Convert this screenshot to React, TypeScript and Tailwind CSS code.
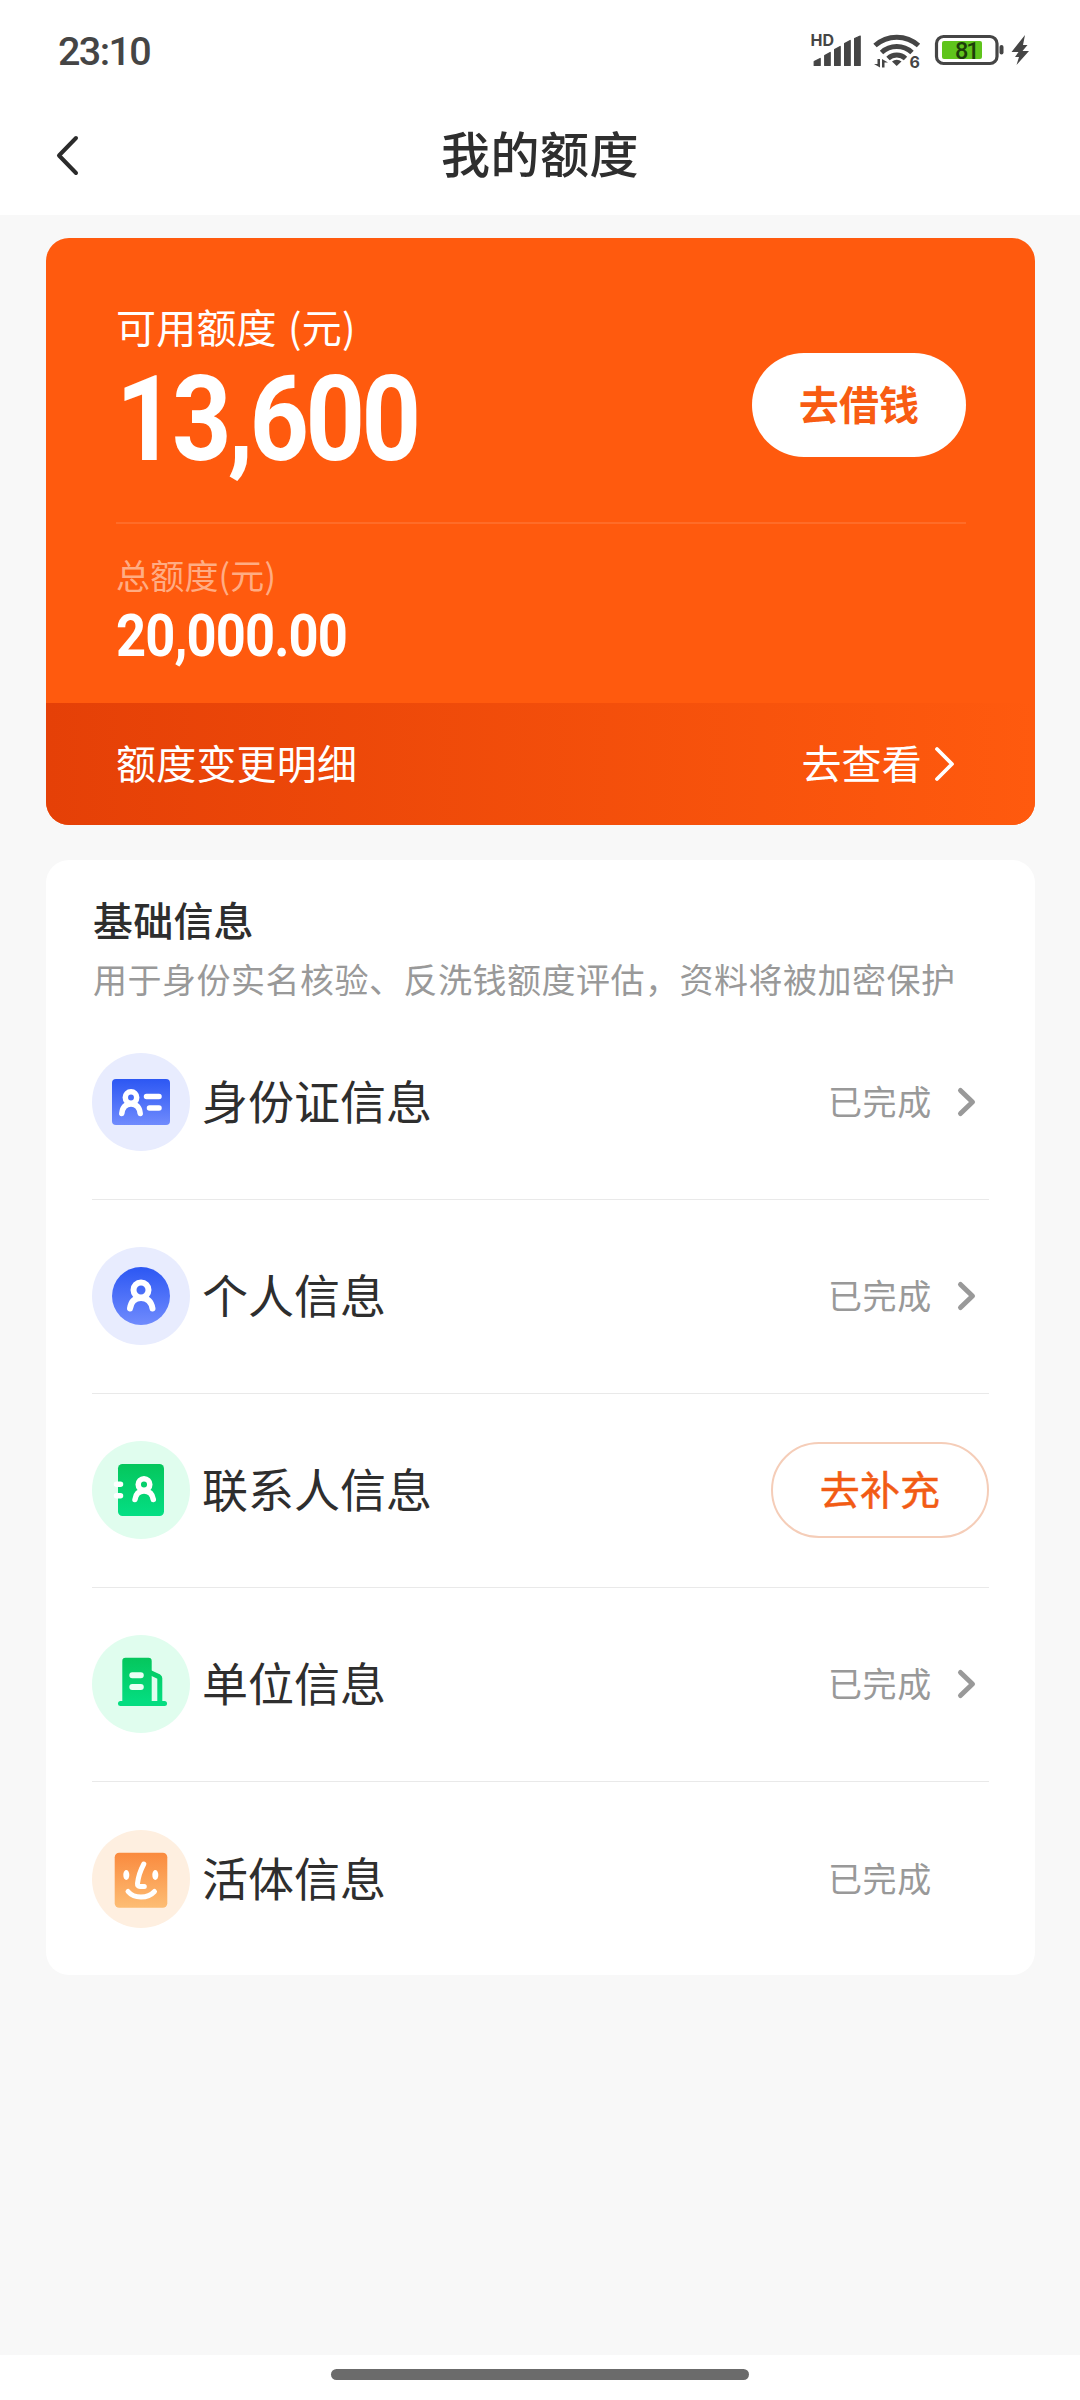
import type { ReactNode } from "react";
import { clsx } from "clsx";

type InfoItem = {
  key: string;
  label: string;
  icon: ReactNode;
  done: boolean;
  arrow: boolean;
};

function StatusIcons() {
  return (
    <svg width="270" height="80" viewBox="0 0 270 80" fill="none">
      <text x="30.500" y="36" fontSize="16" fontWeight="700" fill="#454545" fontFamily="Inter, sans-serif" textLength="23.500">
        HD
      </text>
      <g fill="#454545" stroke="#454545" strokeWidth="1.200" strokeLinejoin="round">
        <path d="M34.200 51.500l6-3V55.400h-6zM44.700 45.500l5.500-3V55.400h-5.500zM54.600 39.500l5.600-3V55.400h-5.600zM64.600 33.500l5.600-3V55.400h-5.600zM74.600 28.500l5.600-2.500V55.400h-5.600z" />
      </g>
      <g fill="#454545">
        <path d="M112 51.500a7 7 0 0 1 9.500 0L116.700 56z" />
        <path d="M94 54h3.500v-5h2.500v8.500zM102 57.500V49l6 3.500h-3.500v5z" />
        <rect x="219.500" y="35" width="4" height="9.500" rx="2" />
        <path d="M245 25l-13.500 17h7l-3.500 5h4l-2.500 8L249 41h-6.500l5-6h-4.500z" />
      </g>
      <g stroke="#454545" strokeWidth="5">
        <path d="M95 35.500a32.500 32.500 0 0 1 43.500 0" />
        <path d="M101.500 42.500a22.500 22.500 0 0 1 30.500 0" />
        <path d="M108 48.500a13 13 0 0 1 17.500 0" />
      </g>
      <text x="129.500" y="58" fontSize="16" fontWeight="700" fill="#454545" fontFamily="Inter, sans-serif">
        6
      </text>
      <rect x="156.500" y="26.500" width="60.500" height="27" rx="7" stroke="#454545" strokeWidth="3.200" />
      <rect x="162" y="31" width="40" height="18" rx="2" fill="#5fc41c" />
      <text x="175" y="48.500" fontSize="23.500" fontWeight="500" fill="#1d3d0a" fontFamily="Roboto, sans-serif" textLength="24.500">
        81
      </text>
    </svg>
  );
}

function IdCardIcon() {
  return (
    <svg className="size-[98px]" viewBox="0 0 98 98" fill="none">
      <defs>
        <linearGradient id="id-card" x1="0" y1="0" x2="0" y2="1">
          <stop stopColor="#2c57f3" />
          <stop offset="1" stopColor="#708bfd" />
        </linearGradient>
      </defs>
      <circle cx="49" cy="49" r="49" fill="#e8ecfe" />
      <rect x="20" y="26" width="58" height="46" rx="4" fill="url(#id-card)" />
      <g stroke="#fff" strokeWidth="5.500" strokeLinecap="round">
        <circle cx="39" cy="44.500" r="5.700" />
        <path d="M29.800 60.500c.7-6.500 4-9.500 9.200-9.500s8.500 3 9.200 9.500" />
        <path d="M54.500 43.500H67M57.500 55H67" />
      </g>
    </svg>
  );
}

function PersonIcon() {
  return (
    <svg className="size-[98px]" viewBox="0 0 98 98" fill="none">
      <defs>
        <linearGradient id="person" x1="0" y1="0" x2="0" y2="1">
          <stop stopColor="#2c57f3" />
          <stop offset="1" stopColor="#708bfd" />
        </linearGradient>
      </defs>
      <circle cx="49" cy="49" r="49" fill="#e8ecfe" />
      <circle cx="49" cy="49" r="29" fill="url(#person)" />
      <g stroke="#fff" strokeWidth="6" strokeLinecap="round">
        <circle cx="49" cy="43" r="7.500" />
        <path d="M38 61.500c1-7 5-10.500 11-10.500s10.300 3.500 11.500 10.500" />
      </g>
    </svg>
  );
}

function ContactsIcon() {
  return (
    <svg className="size-[98px]" viewBox="0 0 98 98" fill="none">
      <defs>
        <linearGradient id="contacts" x1="0" y1="0" x2="0" y2="1">
          <stop stopColor="#05c65c" />
          <stop offset="1" stopColor="#04df84" />
        </linearGradient>
      </defs>
      <circle cx="49" cy="49" r="49" fill="#e0fdee" />
      <rect x="26" y="23" width="46" height="52" rx="4.500" fill="url(#contacts)" />
      <g stroke="#fff" strokeWidth="5.500" strokeLinecap="round">
        <path d="M24.500 43.300h4M24.500 54.700h4" />
        <circle cx="52" cy="43.500" r="5.800" />
        <path d="M43 58.500c.8-6 4-8.500 9-8.500s8.400 2.500 9.300 8.500" />
      </g>
    </svg>
  );
}

function CompanyIcon() {
  return (
    <svg className="size-[98px]" viewBox="0 0 98 98" fill="none">
      <defs>
        <linearGradient id="company" gradientUnits="userSpaceOnUse" x1="0" y1="22" x2="0" y2="71">
          <stop stopColor="#05c65c" />
          <stop offset="1" stopColor="#04df84" />
        </linearGradient>
      </defs>
      <circle cx="49" cy="49" r="49" fill="#e0fdee" />
      <path d="M33.500 22.700h23a3.200 3.200 0 0 1 3.200 3.200V68H30.300V25.900a3.200 3.200 0 0 1 3.200-3.200z" fill="url(#company)" />
      <path d="M58 37.500l9 4.300q.8.500.8 1.500V68" stroke="url(#company)" strokeWidth="5" />
      <path d="M28.500 68.500H72.500" stroke="#04dd80" strokeWidth="5" strokeLinecap="round" />
      <path d="M40.300 40.300h8.500M40.300 52h8.500" stroke="#e9fff4" strokeWidth="6" strokeLinecap="round" />
    </svg>
  );
}

function FaceIcon() {
  return (
    <svg className="size-[98px]" viewBox="0 0 98 98" fill="none">
      <defs>
        <linearGradient id="face" x1="0" y1="0" x2="0" y2="1">
          <stop stopColor="#fa8a3e" />
          <stop offset="1" stopColor="#fdbd74" />
        </linearGradient>
      </defs>
      <circle cx="49" cy="49" r="49" fill="#feefe0" />
      <rect x="22.700" y="22.700" width="52.600" height="55" rx="4.500" fill="url(#face)" />
      <ellipse cx="34.300" cy="45" rx="3" ry="5" fill="#fff" />
      <ellipse cx="63.300" cy="45" rx="3" ry="5" fill="#fff" />
      <g stroke="#fff" strokeWidth="5" strokeLinecap="round" strokeLinejoin="round">
        <path d="M51.800 34q-5.300 10-6.300 19.500-.2 3 2.500 3h4.300" />
        <path d="M36 61.500q4.500 5.500 13 5.500t13.500-5.500" />
      </g>
    </svg>
  );
}

const items: InfoItem[] = [
  { key: "id", label: "身份证信息", icon: <IdCardIcon />, done: true, arrow: true },
  { key: "person", label: "个人信息", icon: <PersonIcon />, done: true, arrow: true },
  { key: "contacts", label: "联系人信息", icon: <ContactsIcon />, done: false, arrow: false },
  { key: "company", label: "单位信息", icon: <CompanyIcon />, done: true, arrow: true },
  { key: "face", label: "活体信息", icon: <FaceIcon />, done: true, arrow: false },
];

function Header() {
  return (
    <header className="h-[215px] bg-white">
      <div className="flex h-[90px] items-start justify-between pt-2.5 pr-[30px] pl-[58px]">
        <span className="pt-5 font-['Roboto'] text-[39.500px] leading-[44px] font-medium tracking-[-1.600px] text-[#454545]">
          23:10
        </span>
        <StatusIcons />
      </div>
      <div className="grid h-[130px] grid-cols-[140px_1fr_140px] items-center">
        <button className="pl-[54px]" aria-label="返回">
          <svg width="28" height="44" viewBox="0 0 28 44" fill="none" stroke="#2b2b2b" strokeWidth="4" strokeLinecap="round" strokeLinejoin="round">
            <path d="M22 5L5 22.500L22 40" />
          </svg>
        </button>
        <h1 className="pb-1.5 text-center text-[49px] leading-[60px] font-medium tracking-[0.500px] text-[#2e2e2e]">我的额度</h1>
      </div>
    </header>
  );
}

function QuotaCard() {
  return (
    <section className="flex h-[587px] flex-col overflow-hidden rounded-[23px] bg-[#ff5a0e] text-white">
      <div className="mr-[69px] ml-[70px] flex h-[284px] justify-between">
        <div className="pt-[59px]">
          <div className="text-[40px] leading-[58px] tracking-[0.200px] [word-spacing:2px]">可用额度 (元)</div>
          <div className="mt-[5px] origin-left scale-x-[0.880] font-['Roboto'] text-[118px] leading-[120px] font-bold tracking-[-4.200px]">
            13,600
          </div>
        </div>
        <button className="mt-[115px] h-[104px] w-[214px] rounded-full bg-white pb-1 text-[40px] font-bold tracking-[0.200px] text-[#f85c12]">
          去借钱
        </button>
      </div>
      <div className="mr-[69px] ml-[70px] h-[2px] shrink-0 bg-[#ff6c28]" />
      <div className="mx-[70px] flex-1 pt-7">
        <div className="text-[34px] leading-[46px] tracking-[0.200px] text-[#ffac83]">总额度(元)</div>
        <div className="mt-[3px] origin-left scale-x-[0.890] font-['Roboto'] text-[59px] leading-[70px] font-bold tracking-[-1px]">
          20,000.00
        </div>
      </div>
      <div className="flex h-[122px] items-center justify-between bg-gradient-to-r from-[#e54007] to-[#ff5a0e] pr-[79px] pl-[70px] text-[40px] tracking-[0.200px]">
        <span className="pb-1">额度变更明细</span>
        <span className="flex items-center gap-3">
          <span className="pb-1">去查看</span>
          <svg width="22" height="38" viewBox="0 0 22 38" fill="none" stroke="currentColor" strokeWidth="3.800" strokeLinecap="round" strokeLinejoin="round">
            <path d="M3 4L18 19L3 34" />
          </svg>
        </span>
      </div>
    </section>
  );
}

function InfoRow({ item, last }: { item: InfoItem; last: boolean }) {
  return (
    <li className={clsx("flex h-[194px] items-center pb-px", !last && "border-b border-[#e9e9e9]")}>
      {item.icon}
      <span className="ml-3 flex-1 pb-1.5 text-[46px] leading-[60px] text-[#2e2e2e]">{item.label}</span>
      {item.done ? (
        <span className="flex items-center pr-[11px] text-[34px] tracking-[0.700px] text-[#999]">
          <span className="pb-[3px]">已完成</span>
          <span className="ml-6 w-[22px]">
            {item.arrow ? (
              <svg width="22" height="32" viewBox="0 0 22 32" fill="none" stroke="currentColor" strokeWidth="5" strokeLinecap="round" strokeLinejoin="round">
                <path d="M4.500 4.500L16.500 16L4.500 27.500" />
              </svg>
            ) : null}
          </span>
        </span>
      ) : (
        <button className="h-24 w-[218px] rounded-full border-2 border-[#f5cdb8] pb-1 text-[40px] tracking-[0.200px] text-[#f25b14] [-webkit-text-stroke:0.5px_#f25b14]">
          去补充
        </button>
      )}
    </li>
  );
}

function InfoCard() {
  return (
    <section className="mt-[35px] h-[1115px] rounded-[23px] bg-white pt-[29px] pr-[46px] pl-[46px]">
      <h2 className="pl-px text-[40px] leading-[60px] font-medium tracking-[0.200px] text-[#2e2e2e]">基础信息</h2>
      <p className="h-[57px] pl-px text-[34px] leading-[60px] tracking-[0.500px] whitespace-nowrap text-[#999]">
        用于身份实名核验、反洗钱额度评估，资料将被加密保护
      </p>
      <ul>
        {items.map((item, i) => (
          <InfoRow key={item.key} item={item} last={i === items.length - 1} />
        ))}
      </ul>
    </section>
  );
}

export default function App() {
  return (
    <div className="flex h-[2400px] w-[1080px] flex-col overflow-hidden bg-[#f8f8f8] font-['Noto_Sans_CJK_SC',sans-serif]">
      <Header />
      <main className="flex-1 pt-[23px] pr-[45px] pl-[46px]">
        <QuotaCard />
        <InfoCard />
      </main>
      <footer className="flex h-[45px] justify-center bg-white pt-3.5">
        <div className="h-[11px] w-[418px] rounded-full bg-[#6b6b6b]" />
      </footer>
    </div>
  );
}
